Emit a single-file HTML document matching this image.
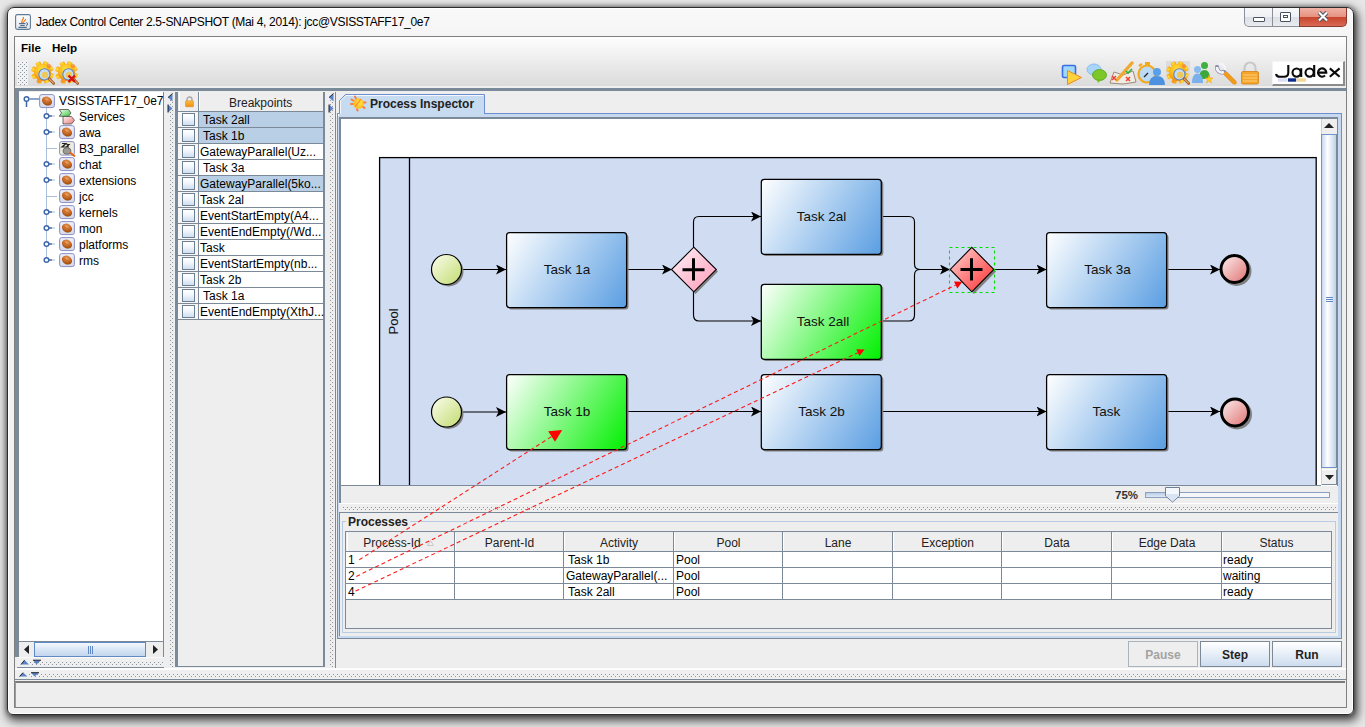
<!DOCTYPE html>
<html><head><meta charset="utf-8">
<style>
*{margin:0;padding:0;box-sizing:border-box}
html,body{width:1365px;height:727px;overflow:hidden;background:#e6e6e6;font-family:"Liberation Sans",sans-serif;font-size:12px;color:#000}
.a{position:absolute}
.t{position:absolute;white-space:nowrap;line-height:1}
#win{position:absolute;left:7px;top:7px;width:1347px;height:708px;background:linear-gradient(#f9f9f9,#f3f3f3 40px,#f1f1f1);border:1px solid #2c2c2c;border-radius:7px 7px 6px 6px;
 box-shadow:inset 0 0 0 1px #fff,0 0 4px 1px rgba(0,0,0,.35),2px 4px 10px 2px rgba(0,0,0,.65)}
#client{position:absolute;left:14px;top:36px;width:1333px;height:672px;background:#eeeeee;border:1px solid #808080}
.dv{background-image:radial-gradient(circle at 1.5px 1.5px,#8a95a1 0.55px,transparent 0.95px),radial-gradient(circle at 3.5px 3.5px,#8a95a1 0.55px,transparent 0.95px);background-size:4px 4px}
.bb{background:#7b8a99}
.row{position:absolute;height:16px;white-space:nowrap}
.cb{position:absolute;width:13px;height:13px;border:1px solid #6d7f95;background:linear-gradient(#ffffff,#f4f8fc 40%,#cfdeef)}
</style></head><body>
<div id="win"></div>
<!-- title icon -->
<svg class="a" style="left:15px;top:14px" width="16" height="16" viewBox="0 0 16 16">
 <defs><linearGradient id="jv" x1="0" y1="0" x2="0" y2="1"><stop offset="0" stop-color="#fdfdfd"/><stop offset="1" stop-color="#e8e8ea"/></linearGradient></defs>
 <rect x="0.6" y="0.6" width="14.8" height="14.8" rx="1.8" fill="url(#jv)" stroke="#5d7a98" stroke-width="1.1"/>
 <path d="M7 9 C5.5 7 9 5.5 8.5 3 M8 9 C8 7.5 11 7 10.5 5" stroke="#ee7a1a" stroke-width="1.2" fill="none"/>
 <path d="M4 9.6 H10.5 M5.2 11.5 H9.7 M3.4 13.4 H11.8" stroke="#4f6f90" stroke-width="1.1"/>
 <path d="M11.3 8.4 Q13.8 10 11.3 11.8" stroke="#4f6f90" stroke-width="1.1" fill="none"/>
</svg>
<div class="t" style="left:36px;top:16px;font-size:12px;letter-spacing:-0.32px;color:#000">Jadex Control Center 2.5-SNAPSHOT (Mai 4, 2014): jcc@VSISSTAFF17_0e7</div>
<!-- window buttons -->
<div class="a" style="left:1244px;top:8px;width:56px;height:19px;border:1px solid #8a8f99;border-top:none;border-radius:0 0 0 5px;background:linear-gradient(#f7f8fa 0,#eef0f3 50%,#dcdfe5 51%,#e9ebef 100%)"></div>
<div class="a" style="left:1272px;top:8px;width:1px;height:18px;background:#8a8f99"></div>
<div class="a" style="left:1299px;top:8px;width:48px;height:19px;border:1px solid #8a3b2e;border-top:none;border-radius:0 0 5px 0;background:linear-gradient(#efb3a6 0,#e6917f 50%,#c8452c 51%,#d86a55 100%)"></div>
<div class="a" style="left:1253px;top:17px;width:12px;height:5px;border:1px solid #4a5163;background:#fff;border-radius:1px"></div>
<div class="a" style="left:1280px;top:12px;width:11px;height:10px;border:1px solid #4a5163;background:#fff;border-radius:1px"></div>
<div class="a" style="left:1283px;top:15px;width:5px;height:3px;border:1px solid #4a5163"></div>
<svg class="a" style="left:1317px;top:11px" width="12" height="11" viewBox="0 0 12 11"><path d="M2 1.5 L10 9.5 M10 1.5 L2 9.5" stroke="#4a4f5c" stroke-width="4"/><path d="M2 1.5 L10 9.5 M10 1.5 L2 9.5" stroke="#fff" stroke-width="2.2"/></svg>

<div id="client"></div>
<!-- menu bar -->
<div class="a" style="left:15px;top:37px;width:1331px;height:49px;background:linear-gradient(#fefefe,#dbdbdb)"></div><div class="a" style="left:15px;top:86px;width:1331px;height:2px;background:#efefef"></div>
<div class="t" style="left:21px;top:42px;font-weight:bold;font-size:11.6px">File</div>
<div class="t" style="left:52px;top:42px;font-weight:bold;font-size:11.6px">Help</div>
<!-- toolbar -->

<div class="a dv" style="left:17px;top:61px;width:11px;height:24px;background-color:#f2f2f2"></div>
<svg class="a" style="left:31px;top:61px" width="24" height="24" viewBox="0 0 24 24">
 <defs><radialGradient id="gg31" cx="0.45" cy="0.3" r="0.75"><stop offset="0" stop-color="#ffe23a"/><stop offset="0.6" stop-color="#f9b21a"/><stop offset="1" stop-color="#f08010"/></radialGradient></defs>
 <g fill="url(#gg31)"><rect x="8.9" y="0.1999999999999993" width="5.2" height="5" rx="1.2" transform="rotate(20 11.5 11.5)"/><rect x="8.9" y="0.1999999999999993" width="5.2" height="5" rx="1.2" transform="rotate(65 11.5 11.5)"/><rect x="8.9" y="0.1999999999999993" width="5.2" height="5" rx="1.2" transform="rotate(110 11.5 11.5)"/><rect x="8.9" y="0.1999999999999993" width="5.2" height="5" rx="1.2" transform="rotate(155 11.5 11.5)"/><rect x="8.9" y="0.1999999999999993" width="5.2" height="5" rx="1.2" transform="rotate(200 11.5 11.5)"/><rect x="8.9" y="0.1999999999999993" width="5.2" height="5" rx="1.2" transform="rotate(245 11.5 11.5)"/><rect x="8.9" y="0.1999999999999993" width="5.2" height="5" rx="1.2" transform="rotate(290 11.5 11.5)"/><rect x="8.9" y="0.1999999999999993" width="5.2" height="5" rx="1.2" transform="rotate(335 11.5 11.5)"/><circle cx="11.5" cy="11.5" r="8.4"/></g>
 <circle cx="18" cy="5" r="2" fill="#f4862a" opacity=".8"/><circle cx="8" cy="20.5" r="2" fill="#f4862a" opacity=".7"/>
 <circle cx="13.4" cy="13.4" r="5.6" fill="#c8dcf2" stroke="#5e86c0" stroke-width="1.1"/>
 <circle cx="14" cy="14" r="3.2" fill="#f2c640" opacity=".85"/>
 <path d="M18.2 17.8 L22.6 22.4" stroke="#a0562a" stroke-width="2.8" stroke-linecap="round"/>
 <path d="M18.2 17.8 L22.4 22.2" stroke="#e8b060" stroke-width="1.1" stroke-linecap="round"/>
 
</svg>
<svg class="a" style="left:55px;top:61px" width="24" height="24" viewBox="0 0 24 24">
 <defs><radialGradient id="gg55" cx="0.45" cy="0.3" r="0.75"><stop offset="0" stop-color="#ffe23a"/><stop offset="0.6" stop-color="#f9b21a"/><stop offset="1" stop-color="#f08010"/></radialGradient></defs>
 <g fill="url(#gg55)"><rect x="8.9" y="0.1999999999999993" width="5.2" height="5" rx="1.2" transform="rotate(20 11.5 11.5)"/><rect x="8.9" y="0.1999999999999993" width="5.2" height="5" rx="1.2" transform="rotate(65 11.5 11.5)"/><rect x="8.9" y="0.1999999999999993" width="5.2" height="5" rx="1.2" transform="rotate(110 11.5 11.5)"/><rect x="8.9" y="0.1999999999999993" width="5.2" height="5" rx="1.2" transform="rotate(155 11.5 11.5)"/><rect x="8.9" y="0.1999999999999993" width="5.2" height="5" rx="1.2" transform="rotate(200 11.5 11.5)"/><rect x="8.9" y="0.1999999999999993" width="5.2" height="5" rx="1.2" transform="rotate(245 11.5 11.5)"/><rect x="8.9" y="0.1999999999999993" width="5.2" height="5" rx="1.2" transform="rotate(290 11.5 11.5)"/><rect x="8.9" y="0.1999999999999993" width="5.2" height="5" rx="1.2" transform="rotate(335 11.5 11.5)"/><circle cx="11.5" cy="11.5" r="8.4"/></g>
 <circle cx="18" cy="5" r="2" fill="#f4862a" opacity=".8"/><circle cx="8" cy="20.5" r="2" fill="#f4862a" opacity=".7"/>
 <circle cx="13.4" cy="13.4" r="5.6" fill="#c8dcf2" stroke="#5e86c0" stroke-width="1.1"/>
 <circle cx="14" cy="14" r="3.2" fill="#f2c640" opacity=".85"/>
 <path d="M18.2 17.8 L22.6 22.4" stroke="#a0562a" stroke-width="2.8" stroke-linecap="round"/>
 <path d="M18.2 17.8 L22.4 22.2" stroke="#e8b060" stroke-width="1.1" stroke-linecap="round"/>
 <path d="M13.5 14.5 L20 21 M20 14.5 L13.5 21" stroke="#d81010" stroke-width="2.4"/>
</svg>


<!-- right toolbar icons -->
<svg class="a" style="left:1060px;top:61px" width="24" height="24" viewBox="0 0 24 24">
 <rect x="2.5" y="4.5" width="13" height="12" rx="1.5" fill="#9fd8f8" stroke="#3a6ee8" stroke-width="1.6"/>
 <path d="M7.5 9.5 L21.5 16.5 L7.5 23.5Z" fill="#ffd23a" stroke="#f08a20" stroke-width="1"/>
</svg>
<svg class="a" style="left:1084px;top:61px" width="24" height="24" viewBox="0 0 24 24">
 <ellipse cx="10" cy="8.5" rx="7" ry="5.5" fill="#a8d6fb" stroke="#7ab4ee" stroke-width="0.8"/>
 <ellipse cx="15.5" cy="14" rx="7" ry="5.5" fill="#7cc828" stroke="#5aa010" stroke-width="0.8"/>
 <path d="M13 18 L14 22 L17 18.5Z" fill="#6aba20"/>
</svg>
<svg class="a" style="left:1109px;top:61px" width="28" height="24" viewBox="0 0 28 24">
 <path d="M1 22 L5 11 L14 14 L24 10 L27 21 L14 23Z" fill="#f0ece6" stroke="#a08a78" stroke-width="1"/>
 <path d="M8 19 L23 2" stroke="#f2a830" stroke-width="3.4" stroke-linecap="round"/>
 <path d="M3 15 L7 19 M7 15 L3 19" stroke="#f04030" stroke-width="1.5"/>
 <path d="M17 16 L21 20 M21 16 L17 20" stroke="#f04030" stroke-width="1.5"/>
 <path d="M17 10 L19 12 L23 8" stroke="#30b030" stroke-width="1.6" fill="none"/>
</svg>
<svg class="a" style="left:1137px;top:61px" width="29" height="24" viewBox="0 0 29 24">
 <circle cx="10" cy="13" r="8.5" fill="#bcdaf4" stroke="#f5a818" stroke-width="2.2"/>
 <rect x="8" y="1" width="5" height="3" fill="#f5a818"/>
 <path d="M2 5 L5 3" stroke="#f5a818" stroke-width="2.2"/>
 <path d="M7 16 L11 12" stroke="#222" stroke-width="1.2"/>
 <circle cx="20" cy="11" r="4" fill="#5aa0e8"/>
 <path d="M12 24 Q12 15 20 15 Q28 15 28 24Z" fill="#4c92e0"/>
</svg>
<div class="a" style="left:1166px;top:61px;width:24px;height:24px;background:#dcdcdc"></div>
<svg class="a" style="left:1166px;top:61px" width="24" height="24" viewBox="0 0 24 24">
 <defs><radialGradient id="gg1166" cx="0.45" cy="0.3" r="0.75"><stop offset="0" stop-color="#ffe23a"/><stop offset="0.6" stop-color="#f9b21a"/><stop offset="1" stop-color="#f08010"/></radialGradient></defs>
 <g fill="url(#gg1166)"><rect x="8.9" y="0.1999999999999993" width="5.2" height="5" rx="1.2" transform="rotate(20 11.5 11.5)"/><rect x="8.9" y="0.1999999999999993" width="5.2" height="5" rx="1.2" transform="rotate(65 11.5 11.5)"/><rect x="8.9" y="0.1999999999999993" width="5.2" height="5" rx="1.2" transform="rotate(110 11.5 11.5)"/><rect x="8.9" y="0.1999999999999993" width="5.2" height="5" rx="1.2" transform="rotate(155 11.5 11.5)"/><rect x="8.9" y="0.1999999999999993" width="5.2" height="5" rx="1.2" transform="rotate(200 11.5 11.5)"/><rect x="8.9" y="0.1999999999999993" width="5.2" height="5" rx="1.2" transform="rotate(245 11.5 11.5)"/><rect x="8.9" y="0.1999999999999993" width="5.2" height="5" rx="1.2" transform="rotate(290 11.5 11.5)"/><rect x="8.9" y="0.1999999999999993" width="5.2" height="5" rx="1.2" transform="rotate(335 11.5 11.5)"/><circle cx="11.5" cy="11.5" r="8.4"/></g>
 <circle cx="18" cy="5" r="2" fill="#f4862a" opacity=".8"/><circle cx="8" cy="20.5" r="2" fill="#f4862a" opacity=".7"/>
 <circle cx="13.4" cy="13.4" r="5.6" fill="#c8dcf2" stroke="#5e86c0" stroke-width="1.1"/>
 <circle cx="14" cy="14" r="3.2" fill="#f2c640" opacity=".85"/>
 <path d="M18.2 17.8 L22.6 22.4" stroke="#a0562a" stroke-width="2.8" stroke-linecap="round"/>
 <path d="M18.2 17.8 L22.4 22.2" stroke="#e8b060" stroke-width="1.1" stroke-linecap="round"/>
 
</svg>

<svg class="a" style="left:1191px;top:61px" width="23" height="24" viewBox="0 0 23 24">
 <circle cx="13.5" cy="4.5" r="3.5" fill="#40b040"/>
 <path d="M8 18 Q8 9 13.5 9 Q19 9 19 18Z" fill="#3aa83a"/>
 <circle cx="6.5" cy="8.5" r="3.5" fill="#88bcf0"/>
 <path d="M1 22 Q1 12.5 6.5 12.5 Q12 12.5 12 22Z" fill="#7ab0ec"/>
 <path d="M18 14 L19 17 L22 17 L19.5 19 L20.5 22 L18 20 L15.5 22 L16.5 19 L14 17 L17 17Z" fill="#ffd21a" stroke="#f09a10" stroke-width="0.5"/>
</svg>
<svg class="a" style="left:1215px;top:61px" width="23" height="24" viewBox="0 0 23 24">
 <path d="M2 6 A5 5 0 0 0 9 11 L19 21" stroke="#8a8fb0" stroke-width="4.2" fill="none" stroke-linecap="round"/>
 <path d="M2 6 A5 5 0 0 0 9 11" stroke="#f4f4fa" stroke-width="2.6" fill="none"/>
 <path d="M4 3 A5 5 0 0 1 10 9" stroke="#f4f4fa" stroke-width="2.6" fill="none"/>
 <path d="M11 13 L19.5 21.5" stroke="#f29a1c" stroke-width="4.4" stroke-linecap="round"/>
</svg>
<svg class="a" style="left:1240px;top:61px" width="20" height="24" viewBox="0 0 20 24">
 <path d="M4.5 11 V7 A5.5 5.5 0 0 1 15.5 7 V11" stroke="#c8c8c8" stroke-width="2.2" fill="none"/>
 <rect x="1.5" y="10.5" width="17" height="12.5" rx="1.5" fill="#f4a52a" stroke="#d88010" stroke-width="0.8"/>
 <path d="M3 14 H17 M3 17 H17 M3 20 H17" stroke="#fbd07a" stroke-width="1"/>
</svg>
<!-- Jadex logo button -->
<div class="a" style="left:1272px;top:61px;width:73px;height:25px;background:#fff;border-right:2px solid #8c8c8c;border-bottom:2px solid #8c8c8c;border-top:1px solid #f4f4f4;border-left:1px solid #f4f4f4"></div>
<svg class="a" style="left:1268px;top:58px" width="80" height="30" viewBox="1268 58 80 30">
 <g stroke="#0a0a0a" stroke-width="2.1" fill="none">
  <path d="M1288.3 65 V72.5 Q1288.3 76.8 1284 76.8 H1280 Q1276.5 76.8 1276 74"/>
  <circle cx="1296.6" cy="72.6" r="4.1"/><path d="M1301.2 68.2 V77"/>
  <circle cx="1309.6" cy="72.6" r="4.1"/><path d="M1314.2 65 V77"/>
  <path d="M1318 72.6 H1326.3 A4.15 4.15 0 1 0 1325 75.6"/>
  <path d="M1329.8 68.4 L1339.6 76.8 M1339.6 68.4 L1329.8 76.8"/>
 </g>
 <rect x="1278" y="78.3" width="9.5" height="3.4" fill="#dcdcf6"/>
 <rect x="1288" y="78.3" width="8.2" height="3.4" fill="#0c2a8c"/>
 <rect x="1296.8" y="78.3" width="9.2" height="3.4" fill="#f2d890"/>
</svg>

<!-- dark band -->
<div class="a bb" style="left:15px;top:88px;width:1331px;height:3px"></div>


<!-- ===== left border of main area ===== -->
<div class="a bb" style="left:15px;top:91px;width:4px;height:566px"></div>
<!-- tree panel -->
<div class="a" style="left:19px;top:92px;width:145px;height:549px;background:#fff;border-right:1px solid #7b8999"></div>

<svg width="0" height="0" style="position:absolute">
 <defs>
  <radialGradient id="nut" cx="0.4" cy="0.35" r="0.75"><stop offset="0" stop-color="#eea266"/><stop offset="0.55" stop-color="#c46620"/><stop offset="1" stop-color="#84400e"/></radialGradient>
  <linearGradient id="nodebg" x1="0" y1="0" x2="0" y2="1"><stop offset="0" stop-color="#eef0f8"/><stop offset="1" stop-color="#d4d8ea"/></linearGradient>
  <symbol id="node" viewBox="0 0 16 16">
   <rect x="0.6" y="1.6" width="14.8" height="13" rx="2.2" fill="url(#nodebg)" stroke="#8a8fc8" stroke-width="1"/>
   <ellipse cx="8" cy="8.1" rx="5.3" ry="4.2" transform="rotate(30 8 8.1)" fill="url(#nut)"/>
   <path d="M4.8 6.5 Q8 8.5 11 10" stroke="#a04a12" stroke-width="0.6" fill="none" opacity=".7"/>
  </symbol>
  <symbol id="toggle" viewBox="0 0 10 8">
   <circle cx="3" cy="4" r="2.2" fill="#fff" stroke="#3f67a8" stroke-width="1.5"/>
   <path d="M5.2 4 H10" stroke="#3f67a8" stroke-width="1.5"/>
  </symbol>
 </defs>
</svg>
<div class="a" style="left:46px;top:108px;width:1px;height:153px;background:#a9bfdc"></div>
<svg class="a" style="left:23px;top:95px" width="16" height="12" viewBox="0 0 16 12"><circle cx="3.5" cy="4" r="2.3" fill="#fff" stroke="#3f67a8" stroke-width="1.5"/><path d="M3.5 6.3 V12 M5.8 4 H16" stroke="#3f67a8" stroke-width="1.5"/><path d="M6 4 H16" stroke="#a9bfdc" stroke-width="1"/></svg>
<svg class="a" style="left:39px;top:93px" width="16" height="16"><use href="#node"/></svg>
<div class="t" style="left:59px;top:95px;font-size:12px">VSISSTAFF17_0e7</div>
<svg class="a" style="left:43px;top:112px" width="12" height="8" viewBox="0 0 12 8"><circle cx="3.5" cy="4" r="2.3" fill="#fff" stroke="#3f67a8" stroke-width="1.5"/><path d="M5.8 4 H9" stroke="#3f67a8" stroke-width="1.5"/><path d="M9 4 H12" stroke="#a9bfdc" stroke-width="1"/></svg>
<svg class="a" style="left:58px;top:108px" width="18" height="17" viewBox="0 0 18 17"><defs><linearGradient id="svg1" x1="0" y1="0" x2="1" y2="1"><stop offset="0" stop-color="#f0fff0"/><stop offset="1" stop-color="#38c838"/></linearGradient><linearGradient id="svr" x1="0" y1="0" x2="1" y2="1"><stop offset="0" stop-color="#fff4f4"/><stop offset="1" stop-color="#e87878"/></linearGradient></defs><path d="M1.3 1.5 H10.5 L13 5 L10.5 8.3 H1.3 L3.5 5Z" fill="url(#svg1)" stroke="#4a4a4a" stroke-width="0.8"/><path d="M5 8.5 H13.5 L16.5 12.3 L13.5 16 H5Z" fill="url(#svr)" stroke="#4a4a4a" stroke-width="0.8"/></svg>
<div class="t" style="left:79px;top:111px;font-size:12px">Services</div>
<svg class="a" style="left:43px;top:128px" width="12" height="8" viewBox="0 0 12 8"><circle cx="3.5" cy="4" r="2.3" fill="#fff" stroke="#3f67a8" stroke-width="1.5"/><path d="M5.8 4 H9" stroke="#3f67a8" stroke-width="1.5"/><path d="M9 4 H12" stroke="#a9bfdc" stroke-width="1"/></svg>
<svg class="a" style="left:59px;top:124px" width="16" height="16"><use href="#node"/></svg>
<div class="t" style="left:79px;top:127px;font-size:12px">awa</div>
<div class="a" style="left:47px;top:148px;width:10px;height:1px;background:#a9bfdc"></div>
<svg class="a" style="left:59px;top:140px" width="17" height="17" viewBox="0 0 17 17"><rect x="0.6" y="1.6" width="14.8" height="13.5" rx="2.2" fill="#ecebdc" stroke="#8a8fc8"/><path d="M3 3.5 H7 L3 7 H7 M7.5 4.5 H10 L7.5 7 H10" stroke="#222" stroke-width="1.2" fill="none"/><ellipse cx="8" cy="11" rx="4" ry="3.3" fill="#9a9a92" stroke="#555" stroke-width="0.7"/><path d="M11 12.5 L16 16.5" stroke="#e06010" stroke-width="1.8"/></svg>
<div class="t" style="left:79px;top:143px;font-size:12px">B3_parallel</div>
<svg class="a" style="left:43px;top:160px" width="12" height="8" viewBox="0 0 12 8"><circle cx="3.5" cy="4" r="2.3" fill="#fff" stroke="#3f67a8" stroke-width="1.5"/><path d="M5.8 4 H9" stroke="#3f67a8" stroke-width="1.5"/><path d="M9 4 H12" stroke="#a9bfdc" stroke-width="1"/></svg>
<svg class="a" style="left:59px;top:156px" width="16" height="16"><use href="#node"/></svg>
<div class="t" style="left:79px;top:159px;font-size:12px">chat</div>
<svg class="a" style="left:43px;top:176px" width="12" height="8" viewBox="0 0 12 8"><circle cx="3.5" cy="4" r="2.3" fill="#fff" stroke="#3f67a8" stroke-width="1.5"/><path d="M5.8 4 H9" stroke="#3f67a8" stroke-width="1.5"/><path d="M9 4 H12" stroke="#a9bfdc" stroke-width="1"/></svg>
<svg class="a" style="left:59px;top:172px" width="16" height="16"><use href="#node"/></svg>
<div class="t" style="left:79px;top:175px;font-size:12px">extensions</div>
<div class="a" style="left:47px;top:196px;width:10px;height:1px;background:#a9bfdc"></div>
<svg class="a" style="left:59px;top:188px" width="16" height="16"><use href="#node"/></svg>
<div class="t" style="left:79px;top:191px;font-size:12px">jcc</div>
<svg class="a" style="left:43px;top:208px" width="12" height="8" viewBox="0 0 12 8"><circle cx="3.5" cy="4" r="2.3" fill="#fff" stroke="#3f67a8" stroke-width="1.5"/><path d="M5.8 4 H9" stroke="#3f67a8" stroke-width="1.5"/><path d="M9 4 H12" stroke="#a9bfdc" stroke-width="1"/></svg>
<svg class="a" style="left:59px;top:204px" width="16" height="16"><use href="#node"/></svg>
<div class="t" style="left:79px;top:207px;font-size:12px">kernels</div>
<svg class="a" style="left:43px;top:224px" width="12" height="8" viewBox="0 0 12 8"><circle cx="3.5" cy="4" r="2.3" fill="#fff" stroke="#3f67a8" stroke-width="1.5"/><path d="M5.8 4 H9" stroke="#3f67a8" stroke-width="1.5"/><path d="M9 4 H12" stroke="#a9bfdc" stroke-width="1"/></svg>
<svg class="a" style="left:59px;top:220px" width="16" height="16"><use href="#node"/></svg>
<div class="t" style="left:79px;top:223px;font-size:12px">mon</div>
<svg class="a" style="left:43px;top:240px" width="12" height="8" viewBox="0 0 12 8"><circle cx="3.5" cy="4" r="2.3" fill="#fff" stroke="#3f67a8" stroke-width="1.5"/><path d="M5.8 4 H9" stroke="#3f67a8" stroke-width="1.5"/><path d="M9 4 H12" stroke="#a9bfdc" stroke-width="1"/></svg>
<svg class="a" style="left:59px;top:236px" width="16" height="16"><use href="#node"/></svg>
<div class="t" style="left:79px;top:239px;font-size:12px">platforms</div>
<svg class="a" style="left:43px;top:256px" width="12" height="8" viewBox="0 0 12 8"><circle cx="3.5" cy="4" r="2.3" fill="#fff" stroke="#3f67a8" stroke-width="1.5"/><path d="M5.8 4 H9" stroke="#3f67a8" stroke-width="1.5"/><path d="M9 4 H12" stroke="#a9bfdc" stroke-width="1"/></svg>
<svg class="a" style="left:59px;top:252px" width="16" height="16"><use href="#node"/></svg>
<div class="t" style="left:79px;top:255px;font-size:12px">rms</div>

<!-- tree h-scrollbar -->
<div class="a" style="left:18px;top:641px;width:146px;height:17px;background:#eeeeee;border:1px solid #7b8999"></div>
<div class="a" style="left:34px;top:642px;width:112px;height:15px;border:1px solid #5f88c6;background:linear-gradient(#f4f8fd,#d9e6f6 50%,#c3d6ee)"></div>
<div class="a" style="left:88px;top:646px;width:1px;height:8px;background:#5f88c6"></div>
<div class="a" style="left:90px;top:646px;width:1px;height:8px;background:#5f88c6"></div>
<div class="a" style="left:92px;top:646px;width:1px;height:8px;background:#5f88c6"></div>
<svg class="a" style="left:24px;top:645px" width="6" height="9"><path d="M5 0 L0 4.5 L5 9Z" fill="#222"/></svg>
<svg class="a" style="left:153px;top:645px" width="6" height="9"><path d="M0 0 L5 4.5 L0 9Z" fill="#222"/></svg>
<!-- tree bottom splitter -->
<div class="a" style="left:17px;top:657px;width:149px;height:11px;background:#efefef;border-top:1px solid #fafafa;border-bottom:1px solid #7b8999"></div><div class="a dv" style="left:29px;top:661px;width:135px;height:5px"></div>
<svg class="a" style="left:20px;top:659px" width="22" height="7" viewBox="0 0 22 7"><path d="M1 5.5 L4.5 1 L9 5.5Z M13 1.2 L21 1.2 L16.5 5.5Z" fill="#5a82c8"/><path d="M1 5.5 L4.5 1.2 M13 1.2 H21" stroke="#111" stroke-width="0.9"/></svg>


<!-- splitter 1 -->
<div class="a" style="left:164px;top:92px;width:11px;height:576px;background:#eeeeee"></div>
<div class="a dv" style="left:169px;top:99px;width:5px;height:568px"></div>
<svg class="a" style="left:167px;top:93px" width="7" height="21" viewBox="0 0 7 21"><path d="M5.5 0.5 L1 4.5 L5.5 8.5Z M1 11.5 L5.5 15.5 L1 19.5Z" fill="#5a82c8"/><path d="M5.5 0.5 L1 4.5 M1 11.5 V19.5" stroke="#111" stroke-width="0.9"/></svg>

<!-- breakpoints panel -->
<div class="a" style="left:175px;top:92px;width:150px;height:575px;background:#eeeeee;border-left:3px solid #7b8a99;border-right:2px solid #7b8999;border-bottom:1px solid #7b8999"></div>

<!-- header -->
<div class="a" style="left:178px;top:92px;width:145px;height:20px;background:#eeeeee;border-bottom:1px solid #7b8999"></div>
<div class="a" style="left:178px;top:92px;width:21px;height:20px;border-right:1px solid #7b8999"></div>
<div class="a" style="left:199px;top:92px;width:1px;height:19px;background:#fff"></div>
<div class="a" style="left:179px;top:92px;width:1px;height:19px;background:#fff"></div>
<svg class="a" style="left:185px;top:96px" width="9" height="12" viewBox="0 0 9 12"><defs><linearGradient id="lk" x1="0" y1="0" x2="0" y2="1"><stop offset="0" stop-color="#fcc040"/><stop offset="1" stop-color="#f08a10"/></linearGradient></defs><path d="M2 5 V3.5 A2.5 2.5 0 0 1 7 3.5 V5" stroke="#a8a8a8" stroke-width="1.4" fill="none"/><rect x="0.5" y="4.8" width="8" height="6" rx="0.8" fill="url(#lk)" stroke="#d88418" stroke-width="0.5"/></svg>
<div class="t" style="left:229px;top:97px;font-size:12px;color:#222">Breakpoints</div>
<div class="a" style="left:178px;top:112px;width:21px;height:16px;background:#f6f6f5;border-right:1px solid #7b8999;border-bottom:1px solid #7b8999"></div>
<div class="a" style="left:199px;top:112px;width:124px;height:16px;background:#b8cfe5;border-bottom:1px solid #7b8999"></div>
<div class="cb" style="left:182px;top:113px"></div>
<div class="t" style="left:203px;top:114px;font-size:12px">Task 2all</div>
<div class="a" style="left:178px;top:128px;width:21px;height:16px;background:#f6f6f5;border-right:1px solid #7b8999;border-bottom:1px solid #7b8999"></div>
<div class="a" style="left:199px;top:128px;width:124px;height:16px;background:#b8cfe5;border-bottom:1px solid #7b8999"></div>
<div class="cb" style="left:182px;top:129px"></div>
<div class="t" style="left:203px;top:130px;font-size:12px">Task 1b</div>
<div class="a" style="left:178px;top:144px;width:21px;height:16px;background:#f6f6f5;border-right:1px solid #7b8999;border-bottom:1px solid #7b8999"></div>
<div class="a" style="left:199px;top:144px;width:124px;height:16px;background:#ffffff;border-bottom:1px solid #7b8999"></div>
<div class="cb" style="left:182px;top:145px"></div>
<div class="t" style="left:200px;top:146px;font-size:12px">GatewayParallel(Uz...</div>
<div class="a" style="left:178px;top:160px;width:21px;height:16px;background:#f6f6f5;border-right:1px solid #7b8999;border-bottom:1px solid #7b8999"></div>
<div class="a" style="left:199px;top:160px;width:124px;height:16px;background:#ffffff;border-bottom:1px solid #7b8999"></div>
<div class="cb" style="left:182px;top:161px"></div>
<div class="t" style="left:203px;top:162px;font-size:12px">Task 3a</div>
<div class="a" style="left:178px;top:176px;width:21px;height:16px;background:#f6f6f5;border-right:1px solid #7b8999;border-bottom:1px solid #7b8999"></div>
<div class="a" style="left:199px;top:176px;width:124px;height:16px;background:#b8cfe5;border-bottom:1px solid #7b8999"></div>
<div class="cb" style="left:182px;top:177px"></div>
<div class="t" style="left:200px;top:178px;font-size:12px">GatewayParallel(5ko...</div>
<div class="a" style="left:178px;top:192px;width:21px;height:16px;background:#f6f6f5;border-right:1px solid #7b8999;border-bottom:1px solid #7b8999"></div>
<div class="a" style="left:199px;top:192px;width:124px;height:16px;background:#ffffff;border-bottom:1px solid #7b8999"></div>
<div class="cb" style="left:182px;top:193px"></div>
<div class="t" style="left:200px;top:194px;font-size:12px">Task 2al</div>
<div class="a" style="left:178px;top:208px;width:21px;height:16px;background:#f6f6f5;border-right:1px solid #7b8999;border-bottom:1px solid #7b8999"></div>
<div class="a" style="left:199px;top:208px;width:124px;height:16px;background:#ffffff;border-bottom:1px solid #7b8999"></div>
<div class="cb" style="left:182px;top:209px"></div>
<div class="t" style="left:200px;top:210px;font-size:12px">EventStartEmpty(A4...</div>
<div class="a" style="left:178px;top:224px;width:21px;height:16px;background:#f6f6f5;border-right:1px solid #7b8999;border-bottom:1px solid #7b8999"></div>
<div class="a" style="left:199px;top:224px;width:124px;height:16px;background:#ffffff;border-bottom:1px solid #7b8999"></div>
<div class="cb" style="left:182px;top:225px"></div>
<div class="t" style="left:200px;top:226px;font-size:12px">EventEndEmpty(/Wd...</div>
<div class="a" style="left:178px;top:240px;width:21px;height:16px;background:#f6f6f5;border-right:1px solid #7b8999;border-bottom:1px solid #7b8999"></div>
<div class="a" style="left:199px;top:240px;width:124px;height:16px;background:#ffffff;border-bottom:1px solid #7b8999"></div>
<div class="cb" style="left:182px;top:241px"></div>
<div class="t" style="left:200px;top:242px;font-size:12px">Task</div>
<div class="a" style="left:178px;top:256px;width:21px;height:16px;background:#f6f6f5;border-right:1px solid #7b8999;border-bottom:1px solid #7b8999"></div>
<div class="a" style="left:199px;top:256px;width:124px;height:16px;background:#ffffff;border-bottom:1px solid #7b8999"></div>
<div class="cb" style="left:182px;top:257px"></div>
<div class="t" style="left:200px;top:258px;font-size:12px">EventStartEmpty(nb...</div>
<div class="a" style="left:178px;top:272px;width:21px;height:16px;background:#f6f6f5;border-right:1px solid #7b8999;border-bottom:1px solid #7b8999"></div>
<div class="a" style="left:199px;top:272px;width:124px;height:16px;background:#ffffff;border-bottom:1px solid #7b8999"></div>
<div class="cb" style="left:182px;top:273px"></div>
<div class="t" style="left:200px;top:274px;font-size:12px">Task 2b</div>
<div class="a" style="left:178px;top:288px;width:21px;height:16px;background:#f6f6f5;border-right:1px solid #7b8999;border-bottom:1px solid #7b8999"></div>
<div class="a" style="left:199px;top:288px;width:124px;height:16px;background:#ffffff;border-bottom:1px solid #7b8999"></div>
<div class="cb" style="left:182px;top:289px"></div>
<div class="t" style="left:203px;top:290px;font-size:12px">Task 1a</div>
<div class="a" style="left:178px;top:304px;width:21px;height:16px;background:#f6f6f5;border-right:1px solid #7b8999;border-bottom:1px solid #7b8999"></div>
<div class="a" style="left:199px;top:304px;width:124px;height:16px;background:#ffffff;border-bottom:1px solid #7b8999"></div>
<div class="cb" style="left:182px;top:305px"></div>
<div class="t" style="left:200px;top:306px;font-size:12px">EventEndEmpty(XthJ...</div>

<!-- splitter 2 -->
<div class="a dv" style="left:329px;top:99px;width:5px;height:568px"></div>
<svg class="a" style="left:328px;top:93px" width="7" height="21" viewBox="0 0 7 21"><path d="M5.5 0.5 L1 4.5 L5.5 8.5Z M1 11.5 L5.5 15.5 L1 19.5Z" fill="#5a82c8"/><path d="M5.5 0.5 L1 4.5 M1 11.5 V19.5" stroke="#111" stroke-width="0.9"/></svg>
<div class="a" style="left:335px;top:92px;width:1px;height:576px;background:#7b8999"></div>

<!-- tab panel -->

<!-- tab panel outer -->
<div class="a" style="left:337px;top:113px;width:1005px;height:526px;border:1px solid #6b8fd2;border-bottom-color:#7b8999;background:#c6d9ef"></div>
<!-- tab -->
<svg class="a" style="left:338px;top:93px" width="148" height="22" viewBox="338 93 148 22">
 <path d="M339.5 114 V100.5 L345.5 94.5 H484.5 V114" fill="#c6daf0" stroke="#6b8fd2" stroke-width="1"/>
 <path d="M340.5 114 V101 L346 95.5 H483.5" fill="none" stroke="#f4f8fd" stroke-width="1"/>
</svg>
<div class="a" style="left:338px;top:114px;width:1px;height:2px;background:#fff"></div>
<svg class="a" style="left:350px;top:95px" width="17" height="17" viewBox="0 0 17 17">
 <g stroke="#ff7a3a" stroke-width="2" stroke-linecap="round">
  <path d="M5 1.5 L6 4"/><path d="M1.5 4.5 L4 6"/><path d="M1 9 L3.5 9"/><path d="M7 14 L7.5 15.5"/><path d="M12.5 11.5 L14.5 13"/><path d="M13.5 7.5 L15.5 7.5"/>
 </g>
 <circle cx="8.5" cy="8.5" r="5.3" fill="#ffc428"/>
 <circle cx="9.5" cy="7.5" r="3" fill="#ffe040" opacity=".8"/>
 <path d="M5 12 L11 4" stroke="#ff8a30" stroke-width="1.2"/>
</svg>
<div class="t" style="left:370px;top:98px;font-size:12px;font-weight:bold;color:#222">Process Inspector</div>

<!-- diagram scroll pane -->
<div class="a" style="left:339px;top:117px;width:999px;height:370px;border:2px solid #7b8999;border-right-width:1px;border-bottom-width:1px;background:#fff"></div>
<svg class="a" style="left:341px;top:119px" width="980" height="366" viewBox="341 119 980 366">
 <defs>
  <linearGradient id="gBlue" x1="0" y1="0" x2="1" y2="1"><stop offset="0" stop-color="#ffffff"/><stop offset="1" stop-color="#5a9ee2"/></linearGradient>
  <linearGradient id="gGreen" x1="0" y1="0" x2="1" y2="1"><stop offset="0" stop-color="#ffffff"/><stop offset="1" stop-color="#00f000"/></linearGradient>
  <linearGradient id="gStart" x1="0" y1="0" x2="1" y2="1"><stop offset="0" stop-color="#fbfdee"/><stop offset="1" stop-color="#c2dc70"/></linearGradient>
  <linearGradient id="gEnd" x1="0" y1="0" x2="1" y2="1"><stop offset="0" stop-color="#fdf0f0"/><stop offset="1" stop-color="#e07070"/></linearGradient>
  <linearGradient id="gGw" x1="0" y1="0" x2="1" y2="1"><stop offset="0" stop-color="#fff4f8"/><stop offset="1" stop-color="#ff98b8"/></linearGradient>
  <linearGradient id="gGwR" x1="0" y1="0" x2="1" y2="1"><stop offset="0" stop-color="#ffd8d8"/><stop offset="1" stop-color="#ff2a2a"/></linearGradient>
  <linearGradient id="tg1" gradientUnits="userSpaceOnUse" x1="506.6" y1="232.6" x2="626.6" y2="307.6"><stop offset="0" stop-color="#ffffff"/><stop offset="1" stop-color="#5a9ee2"/></linearGradient>
  <linearGradient id="tg2" gradientUnits="userSpaceOnUse" x1="761.3" y1="179.3" x2="881.3" y2="254.3"><stop offset="0" stop-color="#ffffff"/><stop offset="1" stop-color="#5a9ee2"/></linearGradient>
  <linearGradient id="tg3" gradientUnits="userSpaceOnUse" x1="761.3" y1="284.3" x2="881.3" y2="359.3"><stop offset="0" stop-color="#ffffff"/><stop offset="1" stop-color="#00f000"/></linearGradient>
  <linearGradient id="tg4" gradientUnits="userSpaceOnUse" x1="1046.6" y1="232.6" x2="1166.6" y2="307.6"><stop offset="0" stop-color="#ffffff"/><stop offset="1" stop-color="#5a9ee2"/></linearGradient>
  <linearGradient id="tg5" gradientUnits="userSpaceOnUse" x1="506.6" y1="374.6" x2="626.6" y2="449.6"><stop offset="0" stop-color="#ffffff"/><stop offset="1" stop-color="#00f000"/></linearGradient>
  <linearGradient id="tg6" gradientUnits="userSpaceOnUse" x1="761.3" y1="374.6" x2="881.3" y2="449.6"><stop offset="0" stop-color="#ffffff"/><stop offset="1" stop-color="#5a9ee2"/></linearGradient>
  <linearGradient id="tg7" gradientUnits="userSpaceOnUse" x1="1046.6" y1="374.6" x2="1166.6" y2="449.6"><stop offset="0" stop-color="#ffffff"/><stop offset="1" stop-color="#5a9ee2"/></linearGradient>
  <marker id="arr" viewBox="0 0 10 10" refX="10" refY="5" markerWidth="10" markerHeight="10" markerUnits="userSpaceOnUse" orient="auto">
   <path d="M0 0 L10 5 L0 10 L2.5 5Z" fill="#000"/>
  </marker>
 </defs>
 <!-- pool -->
 <rect x="379.6" y="157.6" width="936.6" height="400" fill="#d0dcf2" stroke="#000" stroke-width="1.3"/>
 <line x1="409.5" y1="157.6" x2="409.5" y2="490" stroke="#000" stroke-width="1.3"/>
 <text x="0" y="0" transform="translate(398 334.5) rotate(-90)" font-family="Liberation Sans" font-size="13" fill="#111">Pool</text>
 <!-- edges -->
 <g stroke="#000" stroke-width="1.15" fill="none">
  <path d="M461.5 269.5 H506" marker-end="url(#arr)"/>
  <path d="M627 269.5 H672" marker-end="url(#arr)"/>
  <path d="M693.5 247 V222 Q693.5 216.5 699 216.5 H761" marker-end="url(#arr)"/>
  <path d="M693.5 292 V315 Q693.5 321 699 321 H761" marker-end="url(#arr)"/>
  <path d="M881.5 216.5 H909 Q914.5 216.5 914.5 222 V264 Q914.5 269.5 920 269.5 H950" marker-end="url(#arr)"/>
  <path d="M881.5 321 H909 Q914.5 321 914.5 315 V275 Q914.5 269.5 920 269.5"/>
  <path d="M994 269.5 H1046.5" marker-end="url(#arr)"/>
  <path d="M1167 269.5 H1220" marker-end="url(#arr)"/>
  <path d="M461.5 412 H506" marker-end="url(#arr)"/>
  <path d="M627 411.5 H761" marker-end="url(#arr)"/>
  <path d="M881.5 411.5 H1046.5" marker-end="url(#arr)"/>
  <path d="M1167 411.5 H1220" marker-end="url(#arr)"/>
 </g>
 <!-- shadows -->
 <g fill="#808080">
  <circle cx="448.5" cy="271.5" r="15"/>
  <circle cx="448.5" cy="414" r="15"/>
  <circle cx="1236.5" cy="271" r="15"/>
  <circle cx="1237" cy="414.5" r="15"/>
  <rect x="508.5" y="234.5" width="120" height="75" rx="3"/>
  <rect x="763" y="181" width="120.3" height="75" rx="3"/>
  <rect x="763" y="286" width="120.3" height="75" rx="3"/>
  <rect x="1048.5" y="234.5" width="120" height="75" rx="3"/>
  <rect x="508.5" y="376.5" width="120" height="75" rx="3"/>
  <rect x="763" y="376.5" width="120.3" height="75" rx="3"/>
  <rect x="1048.5" y="376.5" width="120" height="75" rx="3"/>
  <path d="M695.5 249 L718 271.5 L695.5 294 L673 271.5Z"/>
  <path d="M974 249 L996 271.5 L974 294 L952 271.5Z"/>
 </g>
 <!-- events -->
 <circle cx="446.5" cy="269.5" r="15" fill="url(#gStart)" stroke="#000" stroke-width="1.2"/>
 <circle cx="446.5" cy="412" r="15" fill="url(#gStart)" stroke="#000" stroke-width="1.2"/>
 <circle cx="1234.5" cy="269" r="13.5" fill="url(#gEnd)" stroke="#000" stroke-width="3"/>
 <circle cx="1235" cy="412.5" r="13.5" fill="url(#gEnd)" stroke="#000" stroke-width="3"/>
 <!-- tasks -->
 <g stroke="#000" stroke-width="1.25">
  <rect x="506.6" y="232.6" width="120" height="75" rx="3" fill="url(#tg1)"/>
  <rect x="761.3" y="179.3" width="120" height="75" rx="3" fill="url(#tg2)"/>
  <rect x="761.3" y="284.3" width="120" height="75" rx="3" fill="url(#tg3)"/>
  <rect x="1046.6" y="232.6" width="120" height="75" rx="3" fill="url(#tg4)"/>
  <rect x="506.6" y="374.6" width="120" height="75" rx="3" fill="url(#tg5)"/>
  <rect x="761.3" y="374.6" width="120" height="75" rx="3" fill="url(#tg6)"/>
  <rect x="1046.6" y="374.6" width="120" height="75" rx="3" fill="url(#tg7)"/>
 </g>
 <!-- gateways -->
 <path d="M693.8 247.2 L716.3 269.5 L693.8 291.8 L671.5 269.5Z" fill="url(#gGw)" stroke="#000" stroke-width="1.1"/>
 <path d="M971.8 247.3 L993.8 269.4 L971.8 291.8 L950.2 269.4Z" fill="url(#gGwR)" stroke="#000" stroke-width="1.1"/>
 <g stroke="#000" stroke-width="3">
  <path d="M682.5 269.8 H704.5 M693.5 258.3 V280.5"/>
  <path d="M960.5 269.4 H982.5 M971.5 258.3 V280.5"/>
 </g>
 <rect x="949.5" y="247.5" width="45" height="45" fill="none" stroke="#00e000" stroke-width="1.1" stroke-dasharray="3 3"/>
 <!-- labels -->
 <g font-family="Liberation Sans" font-size="13.5" fill="#111" text-anchor="middle">
  <text x="567" y="273.5">Task 1a</text>
  <text x="821.5" y="220.5">Task 2al</text>
  <text x="823" y="325.5">Task 2all</text>
  <text x="1107.5" y="273.5">Task 3a</text>
  <text x="567" y="415.5">Task 1b</text>
  <text x="821.5" y="415.5">Task 2b</text>
  <text x="1106.5" y="415.5">Task</text>
 </g>
</svg>
<!-- v scrollbar -->
<div class="a" style="left:1321px;top:119px;width:16px;height:366px;background:#eeeeee;border-left:1px solid #c5d2e0"></div>
<div class="a" style="left:1321px;top:134px;width:16px;height:334px;border:1px solid #6f94d0;border-right-color:#7b8999;background:linear-gradient(90deg,#c8d9ee,#ffffff 40%,#dfe9f5 70%,#bcd0ea)"></div>
<div class="a" style="left:1326px;top:297px;width:7px;height:1px;background:#5f88c6"></div>
<div class="a" style="left:1326px;top:299px;width:7px;height:1px;background:#5f88c6"></div>
<div class="a" style="left:1326px;top:301px;width:7px;height:1px;background:#5f88c6"></div>
<svg class="a" style="left:1324px;top:123px" width="10" height="6"><path d="M0 5 L5 0 L10 5Z" fill="#222"/></svg>
<div class="a" style="left:1322px;top:469px;width:15px;height:16px;background:#f0f0f0;border-right:1px solid #7b8999;border-bottom:1px solid #7b8999;border-top:1px solid #fff"></div>
<svg class="a" style="left:1325px;top:475px" width="9" height="5"><path d="M0 0 L9 0 L4.5 5Z" fill="#222"/></svg>

<!-- zoom row -->
<div class="a" style="left:339px;top:486px;width:999px;height:17px;background:#eeeeee;border-left:2px solid #7b8999"></div>
<div class="a" style="left:341px;top:485px;width:980px;height:1px;background:#7b8999"></div>
<div class="t" style="left:1115px;top:490px;font-size:11.5px;font-weight:bold;color:#333">75%</div>
<div class="a" style="left:1145px;top:492px;width:185px;height:6px;border:1px solid #8aa0bc;background:#f4f6f9"></div>
<div class="a" style="left:1146px;top:493px;width:22px;height:4px;background:linear-gradient(#b9cde8,#dfe8f5)"></div>
<svg class="a" style="left:1164px;top:486px" width="17" height="17" viewBox="0 0 17 17"><path d="M1.5 1.5 H15.5 V10 L8.5 16 L1.5 10Z" fill="#f4f8fd" stroke="#6b7f99" stroke-width="1"/><path d="M2.5 8 H14.5 V10 L8.5 15 L2.5 10Z" fill="#d8e4f3"/></svg>

<!-- splitter between diagram and processes -->
<div class="a" style="left:339px;top:503px;width:999px;height:9px;background:#eeeeee;border-top:1px solid #fff"></div>
<div class="a dv" style="left:342px;top:506px;width:994px;height:4px"></div>

<!-- processes panel -->
<div class="a" style="left:339px;top:512px;width:999px;height:124px;background:#eeeeee;border-top:1px solid #7b8999;border-left:1px solid #7b8999"></div>
<div class="a" style="left:342px;top:521px;width:994px;height:112px;border:1px solid #b7cbe4"></div>
<div class="a" style="left:346px;top:514px;width:64px;height:14px;background:#eeeeee"></div>
<div class="t" style="left:348px;top:516px;font-size:12px;font-weight:bold;color:#222">Processes</div>

<!-- process table -->
<div class="a" style="left:345px;top:531px;width:987px;height:98px;border:1px solid #7b8999;background:#eeeeee"></div>
<div class="a" style="left:346px;top:532px;width:985px;height:20px;background:#eeeeee;border-bottom:1px solid #7b8999"></div>
<div class="t" style="left:346px;top:537px;width:92px;text-align:center;font-size:12px;color:#222">Process-Id</div>
<div class="a" style="left:454px;top:532px;width:1px;height:67px;background:#7b8999"></div>
<div class="a" style="left:455px;top:533px;width:1px;height:18px;background:#fff"></div>
<div class="t" style="left:455px;top:537px;width:109px;text-align:center;font-size:12px;color:#222">Parent-Id</div>
<div class="a" style="left:563px;top:532px;width:1px;height:67px;background:#7b8999"></div>
<div class="a" style="left:564px;top:533px;width:1px;height:18px;background:#fff"></div>
<div class="t" style="left:564px;top:537px;width:110px;text-align:center;font-size:12px;color:#222">Activity</div>
<div class="a" style="left:673px;top:532px;width:1px;height:67px;background:#7b8999"></div>
<div class="a" style="left:674px;top:533px;width:1px;height:18px;background:#fff"></div>
<div class="t" style="left:674px;top:537px;width:109px;text-align:center;font-size:12px;color:#222">Pool</div>
<div class="a" style="left:782px;top:532px;width:1px;height:67px;background:#7b8999"></div>
<div class="a" style="left:783px;top:533px;width:1px;height:18px;background:#fff"></div>
<div class="t" style="left:783px;top:537px;width:110px;text-align:center;font-size:12px;color:#222">Lane</div>
<div class="a" style="left:892px;top:532px;width:1px;height:67px;background:#7b8999"></div>
<div class="a" style="left:893px;top:533px;width:1px;height:18px;background:#fff"></div>
<div class="t" style="left:893px;top:537px;width:109px;text-align:center;font-size:12px;color:#222">Exception</div>
<div class="a" style="left:1001px;top:532px;width:1px;height:67px;background:#7b8999"></div>
<div class="a" style="left:1002px;top:533px;width:1px;height:18px;background:#fff"></div>
<div class="t" style="left:1002px;top:537px;width:110px;text-align:center;font-size:12px;color:#222">Data</div>
<div class="a" style="left:1111px;top:532px;width:1px;height:67px;background:#7b8999"></div>
<div class="a" style="left:1112px;top:533px;width:1px;height:18px;background:#fff"></div>
<div class="t" style="left:1112px;top:537px;width:110px;text-align:center;font-size:12px;color:#222">Edge Data</div>
<div class="a" style="left:1221px;top:532px;width:1px;height:67px;background:#7b8999"></div>
<div class="a" style="left:1222px;top:533px;width:1px;height:18px;background:#fff"></div>
<div class="t" style="left:1222px;top:537px;width:109px;text-align:center;font-size:12px;color:#222">Status</div>
<div class="a" style="left:347px;top:533px;width:1px;height:18px;background:#fff"></div>
<div class="a" style="left:346px;top:552px;width:985px;height:16px;background:#fff;border-bottom:1px solid #7b8999"></div>
<div class="a" style="left:454px;top:552px;width:1px;height:16px;background:#7b8999"></div>
<div class="a" style="left:563px;top:552px;width:1px;height:16px;background:#7b8999"></div>
<div class="a" style="left:673px;top:552px;width:1px;height:16px;background:#7b8999"></div>
<div class="a" style="left:782px;top:552px;width:1px;height:16px;background:#7b8999"></div>
<div class="a" style="left:892px;top:552px;width:1px;height:16px;background:#7b8999"></div>
<div class="a" style="left:1001px;top:552px;width:1px;height:16px;background:#7b8999"></div>
<div class="a" style="left:1111px;top:552px;width:1px;height:16px;background:#7b8999"></div>
<div class="a" style="left:1221px;top:552px;width:1px;height:16px;background:#7b8999"></div>
<div class="t" style="left:348px;top:554px;font-size:12px">1</div>
<div class="t" style="left:568px;top:554px;font-size:12px">Task 1b</div>
<div class="t" style="left:676px;top:554px;font-size:12px">Pool</div>
<div class="t" style="left:1223px;top:554px;font-size:12px">ready</div>
<div class="a" style="left:346px;top:568px;width:985px;height:16px;background:#fff;border-bottom:1px solid #7b8999"></div>
<div class="a" style="left:454px;top:568px;width:1px;height:16px;background:#7b8999"></div>
<div class="a" style="left:563px;top:568px;width:1px;height:16px;background:#7b8999"></div>
<div class="a" style="left:673px;top:568px;width:1px;height:16px;background:#7b8999"></div>
<div class="a" style="left:782px;top:568px;width:1px;height:16px;background:#7b8999"></div>
<div class="a" style="left:892px;top:568px;width:1px;height:16px;background:#7b8999"></div>
<div class="a" style="left:1001px;top:568px;width:1px;height:16px;background:#7b8999"></div>
<div class="a" style="left:1111px;top:568px;width:1px;height:16px;background:#7b8999"></div>
<div class="a" style="left:1221px;top:568px;width:1px;height:16px;background:#7b8999"></div>
<div class="t" style="left:348px;top:570px;font-size:12px">2</div>
<div class="t" style="left:566px;top:570px;font-size:12px">GatewayParallel(...</div>
<div class="t" style="left:676px;top:570px;font-size:12px">Pool</div>
<div class="t" style="left:1223px;top:570px;font-size:12px">waiting</div>
<div class="a" style="left:346px;top:584px;width:985px;height:16px;background:#fff;border-bottom:1px solid #7b8999"></div>
<div class="a" style="left:454px;top:584px;width:1px;height:16px;background:#7b8999"></div>
<div class="a" style="left:563px;top:584px;width:1px;height:16px;background:#7b8999"></div>
<div class="a" style="left:673px;top:584px;width:1px;height:16px;background:#7b8999"></div>
<div class="a" style="left:782px;top:584px;width:1px;height:16px;background:#7b8999"></div>
<div class="a" style="left:892px;top:584px;width:1px;height:16px;background:#7b8999"></div>
<div class="a" style="left:1001px;top:584px;width:1px;height:16px;background:#7b8999"></div>
<div class="a" style="left:1111px;top:584px;width:1px;height:16px;background:#7b8999"></div>
<div class="a" style="left:1221px;top:584px;width:1px;height:16px;background:#7b8999"></div>
<div class="t" style="left:348px;top:586px;font-size:12px">4</div>
<div class="t" style="left:568px;top:586px;font-size:12px">Task 2all</div>
<div class="t" style="left:676px;top:586px;font-size:12px">Pool</div>
<div class="t" style="left:1223px;top:586px;font-size:12px">ready</div>
<svg class="a" style="left:427px;top:540px" width="7" height="6"><path d="M0.5 5.5 L3.5 0.5 L6.5 5.5Z" fill="none" stroke="#c8c8c8"/></svg>

<div class="a" style="left:1128px;top:641px;width:70px;height:26px;border:1px solid #a9b4bf;background:#eeeeee"></div>
<div class="t" style="left:1128px;top:649px;width:70px;text-align:center;font-size:12px;font-weight:bold;color:#a3a3a3">Pause</div>
<div class="a" style="left:1200px;top:641px;width:70px;height:26px;border:1px solid #7b8999;background:linear-gradient(#ffffff,#e9f0f8 45%,#cddcee)"></div>
<div class="t" style="left:1200px;top:649px;width:70px;text-align:center;font-size:12px;font-weight:bold;color:#222">Step</div>
<div class="a" style="left:1272px;top:641px;width:70px;height:26px;border:1px solid #7b8999;background:linear-gradient(#ffffff,#e9f0f8 45%,#cddcee)"></div>
<div class="t" style="left:1272px;top:649px;width:70px;text-align:center;font-size:12px;font-weight:bold;color:#222">Run</div>



<!-- bottom splitter -->
<div class="a" style="left:15px;top:668px;width:1331px;height:2px;background:#fdfdfd"></div><div class="a" style="left:15px;top:670px;width:1331px;height:10px;background:#efefef"></div>
<div class="a dv" style="left:28px;top:673px;width:1312px;height:5px"></div>
<svg class="a" style="left:19px;top:672px" width="22" height="7" viewBox="0 0 22 7"><path d="M0.5 4.5 L4 0.5 L8.5 4.5Z M12 0.7 L20 0.7 L15.5 4.5Z" fill="#5a82c8"/><path d="M0.5 4.5 L4 0.7 M12 0.7 H20" stroke="#111" stroke-width="0.9"/></svg>
<div class="a" style="left:15px;top:679px;width:1331px;height:1px;background:#7b8999"></div>
<!-- status bar -->
<div class="a" style="left:15px;top:681px;width:1330px;height:26px;background:#eeeeee;border-top:2px solid #7a7a7a;border-left:1px solid #9a9a9a"></div>

<svg class="a" style="left:0;top:0" width="1365" height="727" viewBox="0 0 1365 727">
 <!-- red dashed -->
 <g stroke="#ff1a1a" stroke-width="1.1" stroke-dasharray="4 3" fill="none">
  <path d="M359.3 559.8 L551.6 436.5"/>
  <path d="M356.3 576.4 L955.7 285"/>
  <path d="M355.5 591.1 L857.9 352.7"/>
 </g>
 <g fill="#ff0000">
  <path d="M562.2 429.9 L548.2 431.2 L555 441.7Z"/>
  <path d="M962.3 281.7 L954 281.5 L957.3 288.6Z"/>
  <path d="M864.6 349.5 L856.3 349.3 L859.4 356.1Z"/>
 </g>
</svg>
</body></html>
